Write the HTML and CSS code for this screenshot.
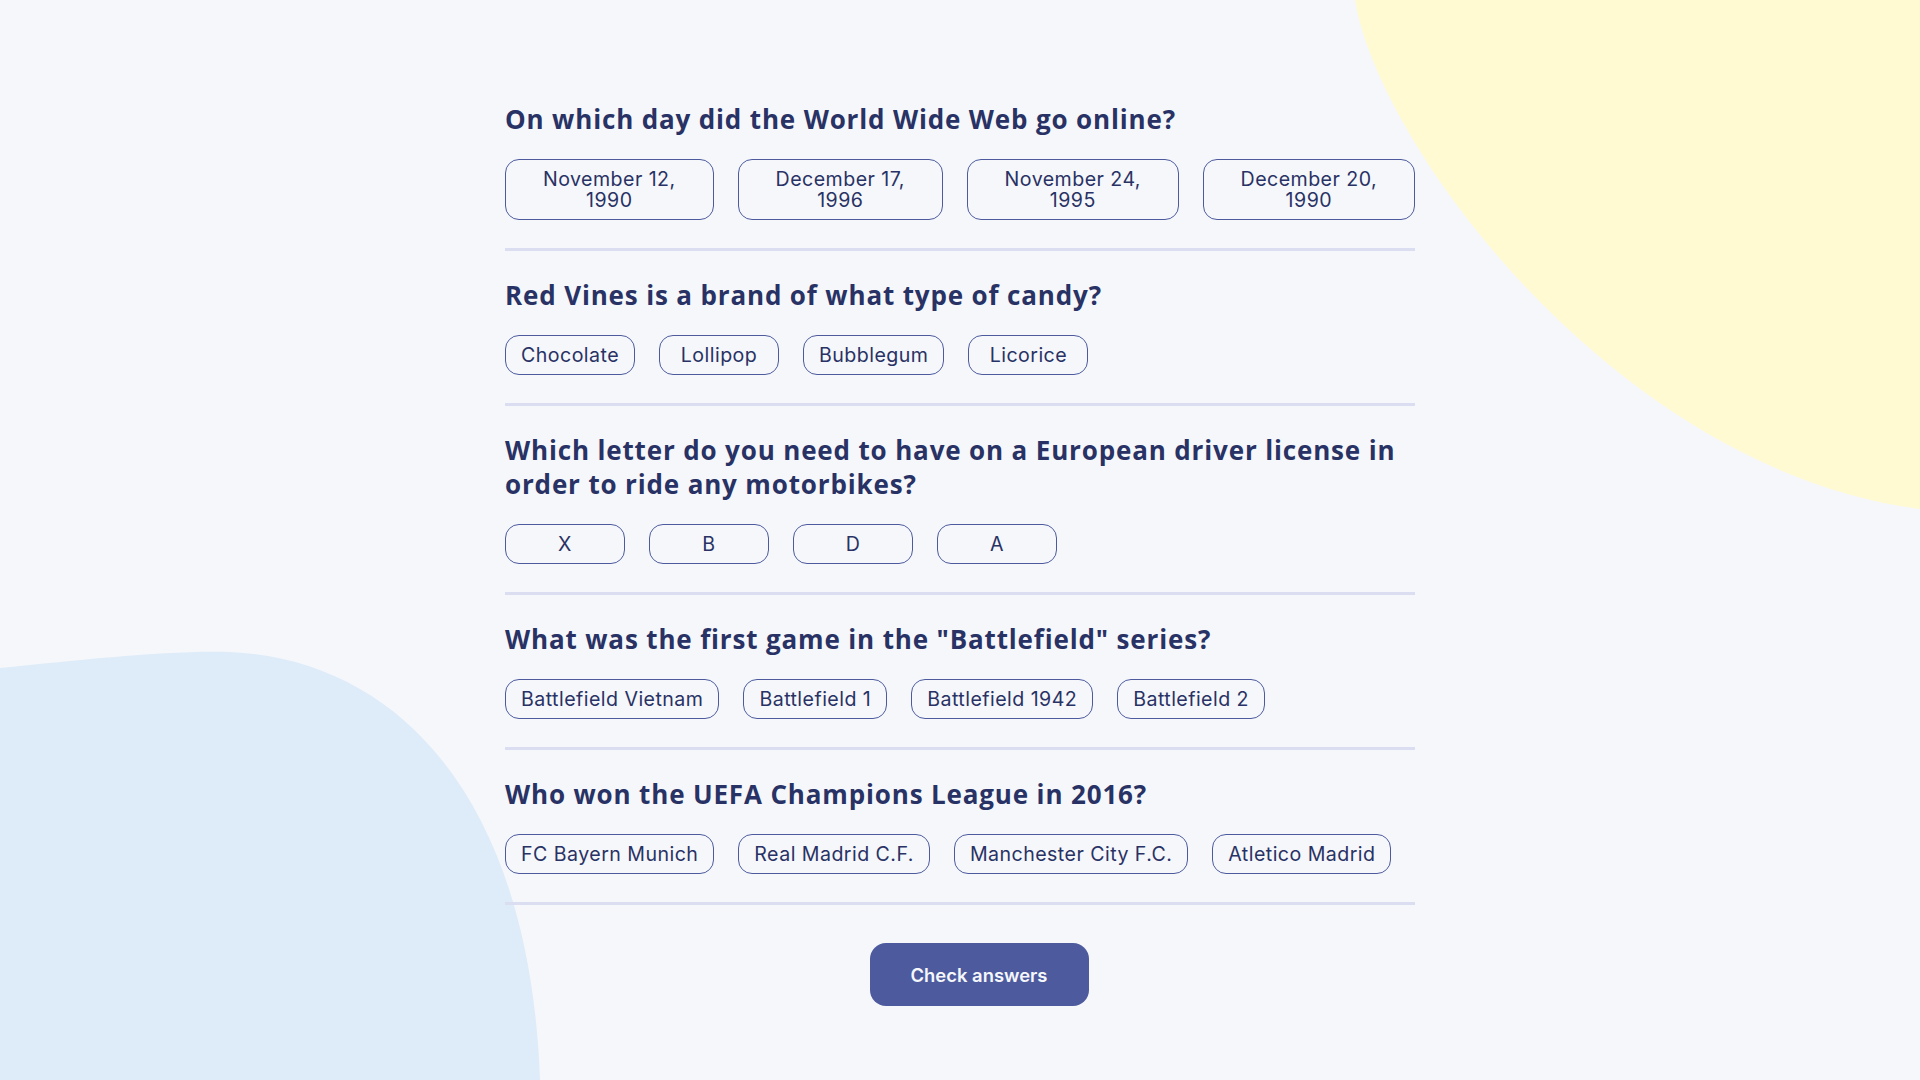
FILE: index.html
```html
<!DOCTYPE html>
<html lang="en">
<head>
<meta charset="utf-8">
<title>Quizzical</title>
<link rel="stylesheet" href="styles.css">
</head>
<body>
<div class="page">
  <svg class="blob blob-yellow" viewBox="1353 0 567 510" width="567" height="510" aria-hidden="true">
    <path d="M1355,0 C1380,150 1620,470 1920,509 L1920,0 Z" fill="#FFFAD1"/>
  </svg>
  <svg class="blob blob-blue" viewBox="0 645 545 435" width="545" height="435" aria-hidden="true">
    <path d="M0,668 C80,660 170,650 230,652 C400,660 530,800 540,1080 L0,1080 Z" fill="#DEEBF8"/>
  </svg>

  <main class="quiz">
    <section class="question">
      <h2 class="q-title">On which day did the World Wide Web go online?</h2>
      <div class="answers">
        <button class="answer">November 12, 1990</button>
        <button class="answer">December 17, 1996</button>
        <button class="answer">November 24, 1995</button>
        <button class="answer">December 20, 1990</button>
      </div>
    </section>

    <section class="question">
      <h2 class="q-title">Red Vines is a brand of what type of candy?</h2>
      <div class="answers">
        <button class="answer">Chocolate</button>
        <button class="answer">Lollipop</button>
        <button class="answer">Bubblegum</button>
        <button class="answer">Licorice</button>
      </div>
    </section>

    <section class="question">
      <h2 class="q-title">Which letter do you need to have on a European driver license in order to ride any motorbikes?</h2>
      <div class="answers">
        <button class="answer">X</button>
        <button class="answer">B</button>
        <button class="answer">D</button>
        <button class="answer">A</button>
      </div>
    </section>

    <section class="question">
      <h2 class="q-title">What was the first game in the "Battlefield" series?</h2>
      <div class="answers">
        <button class="answer">Battlefield Vietnam</button>
        <button class="answer">Battlefield 1</button>
        <button class="answer">Battlefield 1942</button>
        <button class="answer">Battlefield 2</button>
      </div>
    </section>

    <section class="question">
      <h2 class="q-title">Who won the UEFA Champions League in 2016?</h2>
      <div class="answers">
        <button class="answer">FC Bayern Munich</button>
        <button class="answer">Real Madrid C.F.</button>
        <button class="answer">Manchester City F.C.</button>
        <button class="answer">Atletico Madrid</button>
      </div>
    </section>

    <div class="actions">
      <button class="check">Check answers</button>
    </div>
  </main>
</div>
</body>
</html>
```
FILE: styles.css
```css
* { box-sizing: border-box; }

html, body {
  margin: 0;
  padding: 0;
}

body {
  background: #F5F7FB;
  color: #293264;
  font-family: Inter, "Noto Sans", sans-serif;
  overflow: hidden;
}

.page {
  position: relative;
  min-height: 1080px;
}

.blob {
  position: absolute;
  display: block;
  z-index: 0;
}

.blob-yellow {
  top: 0;
  right: 0;
}

.blob-blue {
  left: 0;
  bottom: 0;
}

.quiz {
  position: relative;
  z-index: 1;
  width: 910px;
  margin: 0 auto;
  padding-top: 102px;
  display: flex;
  flex-direction: column;
  gap: 27px;
}

.question {
  padding-bottom: 28px;
  border-bottom: 3px solid #DBDEF0;
}

.q-title {
  margin: 0 0 23px;
  font-family: "Open Sans", Lato, sans-serif;
  font-weight: 700;
  font-size: 26px;
  letter-spacing: 0.85px;
  line-height: 34px;
  color: #293264;
}

.answers {
  display: flex;
  gap: 24px;
}

.answer {
  min-width: 120px;
  padding: 8.5px 15px;
  border: 1px solid #4D5B9E;
  border-radius: 14px;
  background: transparent;
  color: #293264;
  font-family: Inter, "Noto Sans", sans-serif;
  font-weight: 400;
  font-size: 19.6px;
  letter-spacing: 0.45px;
  line-height: 21px;
  text-align: center;
}

.actions {
  display: flex;
  justify-content: center;
  padding-left: 38px;
  padding-top: 11px;
}

.check {
  width: 219px;
  height: 63px;
  border: none;
  border-radius: 16px;
  background: #4D5B9E;
  color: #F5F7FB;
  font-family: Inter, "Noto Sans", sans-serif;
  font-weight: 600;
  font-size: 18.4px;
}
```
